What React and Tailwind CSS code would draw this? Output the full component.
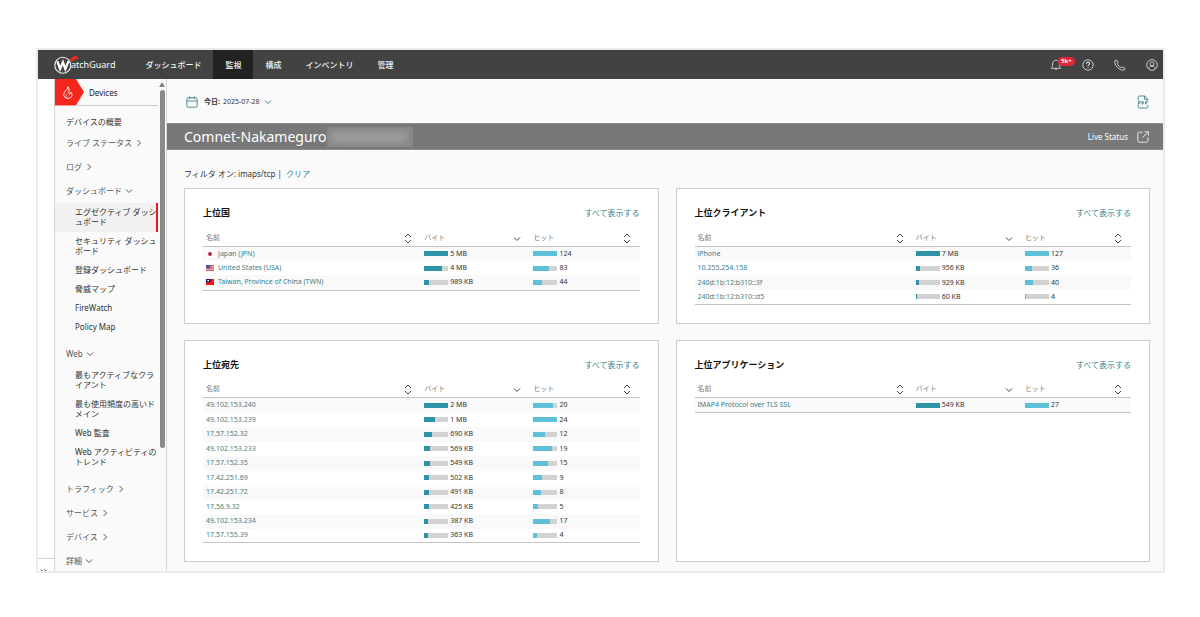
import { Fragment } from "react";

const INK = "text-[#333333]";

const countries = [
  { name: "Japan (JPN)", flag: "jp", bytes: "5 MB", b: 100, hits: 124, h: 100 },
  { name: "United States (USA)", flag: "us", bytes: "4 MB", b: 74, hits: 83, h: 67 },
  { name: "Taiwan, Province of China (TWN)", flag: "tw", bytes: "989 KB", b: 19, hits: 44, h: 36 },
];

const clients = [
  { name: "iPhone", bytes: "7 MB", b: 100, hits: 127, h: 100 },
  { name: "10.255.254.158", bytes: "956 KB", b: 16, hits: 36, h: 30 },
  { name: "240d:1b:12:b310::3f", bytes: "929 KB", b: 15, hits: 40, h: 32 },
  { name: "240d:1b:12:b310::d5", bytes: "60 KB", b: 4, hits: 4, h: 4 },
];

const destinations = [
  { name: "49.102.153.240", bytes: "2 MB", b: 100, hits: 20, h: 83 },
  { name: "49.102.153.239", bytes: "1 MB", b: 44, hits: 24, h: 100 },
  { name: "17.57.152.32", bytes: "690 KB", b: 31, hits: 12, h: 50 },
  { name: "49.102.153.233", bytes: "569 KB", b: 26, hits: 19, h: 79 },
  { name: "17.57.152.35", bytes: "549 KB", b: 23, hits: 15, h: 63 },
  { name: "17.42.251.69", bytes: "502 KB", b: 20, hits: 9, h: 38 },
  { name: "17.42.251.72", bytes: "491 KB", b: 20, hits: 8, h: 33 },
  { name: "17.56.9.32", bytes: "425 KB", b: 18, hits: 5, h: 21 },
  { name: "49.102.153.234", bytes: "387 KB", b: 16, hits: 17, h: 71 },
  { name: "17.57.155.39", bytes: "363 KB", b: 15, hits: 4, h: 16 },
];

const applications = [
  { name: "IMAP4 Protocol over TLS SSL", bytes: "549 KB", b: 100, hits: 27, h: 100 },
];

const dashboardItems = [
  { lines: ["エグゼクティブ ダッシ", "ュボード"], active: true },
  { lines: ["セキュリティ ダッシュ", "ボード"] },
  { lines: ["登録ダッシュボード"] },
  { lines: ["脅威マップ"] },
  { lines: ["FireWatch"] },
  { lines: ["Policy Map"] },
];

const webItems = [
  { lines: ["最もアクティブなクラ", "イアント"] },
  { lines: ["最も使用頻度の高いド", "メイン"] },
  { lines: ["Web 監査"] },
  { lines: ["Web アクティビティの", "トレンド"] },
];

function Chevron({ dir = "down", className = "" }) {
  const d = dir === "down" ? "M1 2.5 4 5.5 7 2.5" : "M2.5 1 5.5 4 2.5 7";
  return (
    <svg viewBox="0 0 8 8" className={`size-2 shrink-0 ${className}`} fill="none" stroke="currentColor" aria-hidden="true">
      <path d={d} />
    </svg>
  );
}

function SortIcon({ both }) {
  return (
    <svg viewBox="0 0 8 12" className="h-3 w-2 shrink-0" fill="none" stroke="#444444" aria-hidden="true">
      {both && <path d="M1 5 4 2 7 5" />}
      <path d={both ? "M1 8 4 11 7 8" : "M1 5.5 4 8.5 7 5.5"} />
    </svg>
  );
}

function Logo() {
  return (
    <a href="#home" aria-label="WatchGuard" className="flex items-center text-white">
      <svg viewBox="0 0 24 20" className="h-5 w-6" aria-hidden="true">
        <circle cx="8.8" cy="10.2" r="8" fill="none" stroke="#f4f4f4" strokeWidth="1.1" />
        <path d="M3.4 6.4 6.1 14 8.9 7.2 11.3 14 14.5 6.2" fill="none" stroke="#ffffff" strokeWidth="2.3" strokeLinejoin="miter" />
        <path d="M15.8 4.4C17.4 2.2 20 1 23.2 .9L24 4C21.4 4.2 19.4 5 17.4 6.8Z" fill="#f5261c" />
      </svg>
      <span className="-ml-[7px] text-[9px] leading-4">atchGuard</span>
    </a>
  );
}

function Flag({ code }) {
  return (
    <svg viewBox="0 0 8 6" className="h-[6px] w-2 shrink-0" aria-hidden="true">
      {code === "jp" && (
        <>
          <rect width="8" height="6" fill="#ffffff" />
          <circle cx="4" cy="3" r="1.9" fill="#bc1424" />
        </>
      )}
      {code === "us" && (
        <>
          <rect width="8" height="6" fill="#f0b9bc" />
          <path d="M0 .5H8M0 2.2H8M0 3.9H8M0 5.5H8" stroke="#d8565f" strokeWidth=".9" />
          <rect width="4.4" height="3.3" fill="#4657a6" />
        </>
      )}
      {code === "tw" && (
        <>
          <rect width="8" height="6" fill="#f0140c" />
          <rect width="4.4" height="3.3" fill="#10108c" />
          <circle cx="2.2" cy="1.6" r=".9" fill="#ffffff" />
        </>
      )}
    </svg>
  );
}

function Bar({ value, tone }) {
  return (
    <span className="inline-block h-[5px] w-6 shrink-0 bg-[#d2d2d2]">
      <span className={`block h-full ${tone}`} style={{ width: `${value}%` }} />
    </span>
  );
}

function Card({ title, rows }) {
  const columns = [
    { label: "名前", both: true, width: "w-1/2" },
    { label: "バイト", both: false, width: "w-1/4" },
    { label: "ヒット", both: true, width: "w-1/4" },
  ];
  return (
    <section className="min-w-0 border border-[#cccccc] bg-white px-[18px] pt-4 pb-[18px]">
      <div className="flex h-4 items-center justify-between">
        <h2 className="text-[9px] leading-4 font-bold text-[#111111]">{title}</h2>
        <a href="#all" className="text-[8px] leading-4 text-[#3d7f87]">すべて表示する</a>
      </div>
      <table className="mt-[9px] w-full table-fixed border-collapse border-b border-[#c4c4c4] text-[7px] leading-3">
        <thead>
          <tr className="h-4 border-b border-[#c4c4c4]">
            {columns.map((c) => (
              <th key={c.label} scope="col" className={`${c.width} p-0 pr-[9px] pl-[3px] text-left font-normal text-[#777777]`}>
                <button type="button" className="flex w-full items-center justify-between">
                  {c.label}
                  <SortIcon both={c.both} />
                </button>
              </th>
            ))}
          </tr>
        </thead>
        <tbody>
          {rows.map((r) => (
            <tr key={r.name} className="odd:h-[15px] odd:bg-[#f9f9f9] even:h-[14px]">
              <td className="p-0 pl-[3px]">
                <a href="#detail" className="flex items-center gap-1 text-[#3d7f87]">
                  {r.flag && <Flag code={r.flag} />}
                  {r.name}
                </a>
              </td>
              <td className="p-0 pl-[3px]">
                <span className={`flex items-center gap-[2px] ${INK}`}>
                  <Bar value={r.b} tone="bg-[#2f93a8]" />
                  {r.bytes}
                </span>
              </td>
              <td className="p-0 pl-[3px]">
                <span className={`flex items-center gap-[2px] ${INK}`}>
                  <Bar value={r.h} tone="bg-[#5bc0d8]" />
                  {r.hits}
                </span>
              </td>
            </tr>
          ))}
        </tbody>
      </table>
    </section>
  );
}

function Section({ label, dir }) {
  return (
    <button type="button" className="flex h-6 items-center gap-[3px] pl-[11px] text-[#555555]">
      {label}
      <Chevron dir={dir} />
    </button>
  );
}

function SubMenu({ items }) {
  return (
    <ul>
      {items.map((item) => (
        <li key={item.lines[0]}>
          <a
            href="#page"
            className={`block border-r-2 pt-1 pb-[5px] pl-5 leading-[10px] whitespace-nowrap text-[#333333] ${
              item.active ? "border-[#f01818] bg-[#f1f1f1]" : "border-transparent"
            }`}
          >
            {item.lines.map((line, i) => (
              <Fragment key={line}>
                {i > 0 && <br />}
                {line}
              </Fragment>
            ))}
          </a>
        </li>
      ))}
    </ul>
  );
}

function Sidebar() {
  return (
    <aside className="flex w-[113px] shrink-0 border-x border-[#d4d4d4] bg-[#fafafa]">
      <div className="h-0 min-h-full w-[103px] shrink-0 overflow-hidden">
        <div className="flex h-[27px] items-stretch">
          <svg viewBox="0 0 30 27" className="h-[27px] w-[30px]" aria-hidden="true">
            <path d="M0 0H21L29 13 21 26.5H0Z" fill="#f5261c" />
            <path d="M13 7.6C13.4 10.6 8.6 12 8.6 16A4.3 4.3 0 0 0 17 16.3C17 14.6 16.3 13.8 15.9 13.2 15.8 14.5 15 15.2 14.2 15.1 13 14.9 15.2 10.6 13 7.6Z" fill="none" stroke="#ffffff" strokeWidth=".9" />
            <path d="M12.5 18.4A1.9 1.9 0 0 1 12.3 15" fill="none" stroke="#ffffff" strokeWidth=".7" />
          </svg>
          <span className="-ml-2 flex flex-1 items-center border-b border-[#cccccc] pt-px pl-3 text-[#222222]">Devices</span>
        </div>
        <nav className="flex flex-col pt-[7px]">
          <a href="#overview" className="flex h-[18px] items-center pl-[11px] text-[#333333]">デバイスの概要</a>
          <Section label="ライブ ステータス" dir="right" />
          <Section label="ログ" dir="right" />
          <Section label="ダッシュボード" dir="down" />
          <SubMenu items={dashboardItems} />
          <div className="mt-[5px]">
            <Section label="Web" dir="down" />
          </div>
          <SubMenu items={webItems} />
          <div className="mt-[5px]">
            <Section label="トラフィック" dir="right" />
            <Section label="サービス" dir="right" />
            <Section label="デバイス" dir="right" />
            <Section label="詳細" dir="down" />
          </div>
        </nav>
      </div>
      <div className="flex flex-1 flex-col items-center pt-[3px]" aria-hidden="true">
        <svg viewBox="0 0 6 5" className="h-[5px] w-[6px]">
          <path d="M3 0 6 5H0Z" fill="#808080" />
        </svg>
        <div className="mt-[3px] h-[358px] w-[5px] rounded-full bg-[#8a8a8a]" />
      </div>
    </aside>
  );
}

function Header() {
  const items = ["ダッシュボード", "監視", "構成", "インベントリ", "管理"];
  return (
    <header className="flex h-[29px] items-center bg-[#424242] pr-[5px] pl-4 text-[#f4f4f4]">
      <Logo />
      <nav className="ml-[18px] flex h-full font-medium">
        {items.map((label) => (
          <a key={label} href="#tab" className={`flex items-center px-3 ${label === "監視" ? "bg-[#222222]" : ""}`}>
            {label}
          </a>
        ))}
      </nav>
      <div className="ml-auto flex items-center gap-5 pt-px text-[#d8d8d8]">
        <button type="button" aria-label="通知" className="relative">
          <svg viewBox="0 0 12 12" className="size-3" fill="none" stroke="currentColor" strokeWidth=".9" aria-hidden="true">
            <path d="M1.2 9.3C2.4 8.3 2.6 7.2 2.6 5 2.6 2.6 4 1.2 6 1.2S9.4 2.6 9.4 5C9.4 7.2 9.6 8.3 10.8 9.3ZM4.6 9.5A1.5 1.5 0 0 0 7.4 9.5" />
          </svg>
          <span className="absolute -top-[2px] left-2 rounded-full bg-[#e0263c] px-[3px] text-[6px] leading-[9px] font-bold text-white">5k+</span>
        </button>
        <button type="button" aria-label="ヘルプ">
          <svg viewBox="0 0 12 12" className="size-3" fill="none" stroke="currentColor" strokeWidth=".9" aria-hidden="true">
            <circle cx="6" cy="6" r="5.2" />
            <path d="M4.4 4.8C4.4 3.7 5 3.1 6 3.1S7.6 3.7 7.6 4.6C7.6 5.7 6 5.8 6 7.1M6 8V9.1" strokeWidth="1.1" />
          </svg>
        </button>
        <button type="button" aria-label="電話">
          <svg viewBox="0 0 12 12" className="size-3" fill="none" stroke="currentColor" strokeWidth=".9" strokeLinejoin="round" aria-hidden="true">
            <path d="M1 1.8 2.4.9 4.2 3.4 3.3 4.6C3.8 6.2 5.8 8.2 7.4 8.7L8.6 7.8 11.1 9.6 10.2 11C8.6 11.8 5.6 10.6 3.5 8.5S.2 3.4 1 1.8Z" />
          </svg>
        </button>
        <button type="button" aria-label="アカウント">
          <svg viewBox="0 0 12 12" className="size-3" fill="none" stroke="currentColor" strokeWidth=".9" aria-hidden="true">
            <circle cx="6" cy="6" r="5.3" />
            <circle cx="6" cy="4.8" r="2" />
            <path d="M2.6 9.8C3 8 4.2 7.2 6 7.2S9 8 9.4 9.8" />
          </svg>
        </button>
      </div>
    </header>
  );
}

export default function App() {
  return (
    <div
      lang="ja"
      className="min-h-screen bg-white pt-12 pr-[35px] pb-11 pl-9 font-['Noto_Sans','Noto_Sans_CJK_JP',sans-serif] text-[8px] leading-3"
    >
      <div className="border-2 border-[#ebebeb]">
        <Header />
        <div className="flex">
          <div className="flex w-4 shrink-0 flex-col justify-end bg-white">
            <button type="button" aria-label="メニューを展開" className="h-[13px] overflow-hidden border-t border-[#d4d4d4] pt-[10px] pr-1">
              <svg viewBox="0 0 8 6" className="mx-auto h-[6px] w-2" fill="none" stroke="#333333" aria-hidden="true">
                <path d="M1 .5 3.5 3 1 5.5M4.5 .5 7 3 4.5 5.5" />
              </svg>
            </button>
          </div>
          <Sidebar />
          <main className="min-w-0 flex-1 bg-[#fafafa] pb-[9px]">
            <div className="flex h-11 items-center justify-between pt-[2px] pr-[14px] pl-[19px]">
              <button type="button" className="flex items-center text-[7px] text-[#333333]">
                <svg viewBox="0 0 12 12" className="mr-[6px] size-3" fill="none" stroke="#3d8088" strokeWidth=".9" aria-hidden="true">
                  <rect x=".8" y="1.8" width="10.4" height="9.4" rx="1.4" />
                  <path d="M1 5H11M3.6 .3V3M8.4 .3V3" />
                </svg>
                <span className="font-bold">今日:</span>
                <span className="ml-[3px]">2025-07-28</span>
                <Chevron className="ml-1 text-[#3d8088]" />
              </button>
              <button type="button" aria-label="PDF">
                <svg viewBox="0 0 12 14" className="h-[14px] w-3" fill="none" stroke="#3d8088" strokeWidth=".9" aria-hidden="true">
                  <path d="M1.2 5.5V2.3A1.3 1.3 0 0 1 2.5 1H7.6L10.8 4.2V5.5M7.6 1V4.2H10.8M1.2 9.8V11.7A1.3 1.3 0 0 0 2.5 13H9.5A1.3 1.3 0 0 0 10.8 11.7V9.8" />
                  <path d="M1.4 9.4V6.4H2.6A.8.8 0 0 1 2.6 8.1H1.4M5 6.4H5.7A1.5 1.5 0 0 1 5.7 9.1H5ZM8.6 9.4V6.4H10.8M8.6 7.9H10.4" />
                </svg>
              </button>
            </div>
            <div className="flex h-[27px] items-center justify-between border-y border-[#8c8c8c] bg-[#787878] pr-[14px] pl-[17px] text-white">
              <div className="flex items-center">
                <h1 className="text-[14px] leading-5">Comnet-Nakameguro</h1>
                <div className="flex h-5 w-[86px] items-center overflow-hidden bg-[#868686]" aria-hidden="true">
                  <div className="ml-1 h-2 w-[76px] bg-[#a6a6a6] blur-xs" />
                </div>
              </div>
              <a href="#live" className="flex items-center gap-[9px]">
                Live Status
                <svg viewBox="0 0 12 12" className="size-3" fill="none" stroke="#e8e8e8" aria-hidden="true">
                  <path d="M5.6 1.2H2.4A1.6 1.6 0 0 0 .8 2.8V9.6A1.6 1.6 0 0 0 2.4 11.2H9.4A1.6 1.6 0 0 0 11 9.6V6.4M7.6.8H11.4V4.6M11.2 1 5.6 6.6" />
                </svg>
              </a>
            </div>
            <div className="flex h-[38px] items-center pt-[9px] pl-[17px] text-[#333333]">
              <span>フィルタ オン:</span>
              <span className="ml-[2px]">imaps/tcp |</span>
              <a href="#clear" className="ml-1 text-[#3d7f87]">クリア</a>
            </div>
            <div className="grid grid-cols-2 gap-x-[17px] gap-y-4 pr-[13px] pl-[17px]">
              <Card title="上位国" rows={countries} />
              <Card title="上位クライアント" rows={clients} />
              <Card title="上位宛先" rows={destinations} />
              <Card title="上位アプリケーション" rows={applications} />
            </div>
          </main>
        </div>
      </div>
    </div>
  );
}
